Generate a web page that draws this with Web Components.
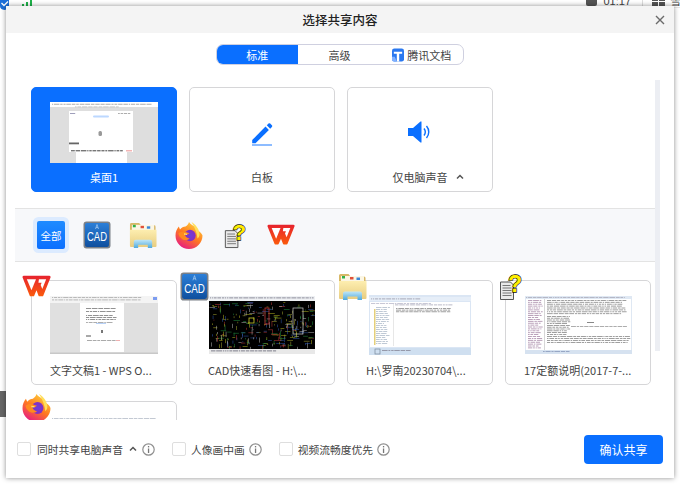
<!DOCTYPE html>
<html lang="zh"><head><meta charset="utf-8"><title>选择共享内容</title>
<style>
html,body{margin:0;height:100%;background:#fff;overflow:hidden}
body{font:11px "Noto Sans CJK SC","Liberation Sans",sans-serif;color:#444}
</style></head><body>
<share-desktop>
<share-dialog>
  <share-tabs></share-tabs>
  <share-scroller>
    <share-grid>
      <share-card label="桌面1" selected><app-thumb kind="desktop"></app-thumb></share-card>
      <share-card label="白板"><app-icon name="pen" size="28"></app-icon></share-card>
      <share-card label="仅电脑声音" chevron><app-icon name="speaker" size="28"></app-icon></share-card>
    </share-grid>
    <share-strip></share-strip>
    <share-grid class="windows">
      <share-card start label="文字文稿1 - WPS O..." badge="wps"><app-thumb kind="wps"></app-thumb></share-card>
      <share-card start label="CAD快速看图 - H:\..." badge="cad"><app-thumb kind="cad"></app-thumb></share-card>
      <share-card start label="H:\罗南20230704\..." badge="folder"><app-thumb kind="folder"></app-thumb></share-card>
      <share-card start label="17定额说明(2017-7-..." badge="doc"><app-thumb kind="notes"></app-thumb></share-card>
      <share-card label="" badge="firefox"><app-thumb kind="browser"></app-thumb></share-card>
    </share-grid>
  </share-scroller>
  <share-footer></share-footer>
</share-dialog>
</share-desktop>
<script>
const ICONS={
pen:`<svg viewBox="0 0 28 28" width="100%" height="100%"><path d="M4.200 22 17.500 8.600l3.400 3.400L7.500 25.200H4.200z" fill="#0a6fff"/><path d="M18.800 7.300l1.700-1.700a1.200 1.200 0 0 1 1.700 0l1.700 1.700a1.200 1.200 0 0 1 0 1.700l-1.700 1.700z" fill="#0a6fff"/><rect x="4" y="26" width="20" height="2" fill="#8dbcff"/></svg>`,
speaker:`<svg viewBox="0 0 28 28" width="100%" height="100%"><path d="M2 10h5L14.500 3.500h1V24.500h-1L7 18H2z" fill="#0a6fff"/><path d="M18 10.500c1.500 2 1.500 5 0 7M20.500 8c3 3.500 3 8.500 0 12" fill="none" stroke="#0a6fff" stroke-width="1.400"/></svg>`,
close:`<svg viewBox="0 0 10 10" width="100%" height="100%"><path d="M1 1l8 8M9 1L1 9" stroke="#6b6b6b" stroke-width="1.400" fill="none"/></svg>`,
chevron:`<svg viewBox="0 0 8 6" width="100%" height="100%"><path d="M1 4.500 4 1.500l3 3" stroke="#555" stroke-width="1.500" fill="none"/></svg>`,
info:`<svg viewBox="0 0 13 13" width="100%" height="100%"><circle cx="6.500" cy="6.500" r="5.700" fill="none" stroke="#8f8f8f" stroke-width="1.200"/><rect x="5.900" y="5.500" width="1.300" height="4.500" fill="#777"/><rect x="5.900" y="3" width="1.300" height="1.400" fill="#777"/></svg>`,
tdoc:`<svg viewBox="0 0 13 14" width="100%" height="100%"><rect width="13" height="14" rx="2.500" fill="#2a78f0"/><path d="M2 3.500h9v2.200H7.800V14H5.200V5.700H2z" fill="#fff"/><path d="M0 9l3 0 2.200 5H2a2 2 0 0 1-2-2z" fill="#7fb0ff"/></svg>`,
wps:`<svg viewBox="0 0 30 24" width="100%" height="100%"><defs><linearGradient id="w" x1="0" y1="0" x2="0" y2="1"><stop offset="0" stop-color="#e6232e"/><stop offset="1" stop-color="#fb5b0c"/></linearGradient></defs><path d="M.500 2.500a1.500 1.500 0 0 1 1.500-1.500H28a1.500 1.500 0 0 1 1.400 2L22 21.500a1 1 0 0 1-1 .7h-3a1 1 0 0 1-.9-.7L15 16l-2.400 5.500a1 1 0 0 1-.9.7H9a1 1 0 0 1-1-.7z" fill="url(#w)"/><path d="M5 4.500h9.500L9.800 16z" fill="#fff"/><path d="M17.500 4.500h7.500l-4 10-1.700-4 1-2.500h-3.300z" fill="#fff"/></svg>`,
cad:`<svg viewBox="0 0 28 28" width="100%" height="100%"><defs><linearGradient id="c" x1="0" y1="0" x2="0" y2="1"><stop offset="0" stop-color="#2b7fd8"/><stop offset="1" stop-color="#0f4f9e"/></linearGradient></defs><rect x=".500" y=".500" width="27" height="27" rx="3" fill="#7b8087"/><rect x="2" y="2" width="24" height="24" rx="2" fill="url(#c)"/><path d="M14 3.500 12.500 8M14 3.500 15.500 8M13 6.500h2" stroke="#9cc4ec" stroke-width=".8" fill="none"/><text x="14" y="20" text-anchor="middle" textLength="20" lengthAdjust="spacingAndGlyphs" font-family="Liberation Sans" font-size="12" fill="#fff">CAD</text></svg>`,
folder:`<svg viewBox="0 0 29 28" width="100%" height="100%"><defs><linearGradient id="f" x1="0" y1="0" x2="0" y2="1"><stop offset="0" stop-color="#fdeeb0"/><stop offset="1" stop-color="#e8cd80"/></linearGradient><linearGradient id="b" x1="0" y1="0" x2="0" y2="1"><stop offset="0" stop-color="#bfe6f7"/><stop offset="1" stop-color="#4fa9dc"/></linearGradient></defs><path d="M1 3a1.500 1.500 0 0 1 1.500-1.500h8l2 2.500H26a1.500 1.500 0 0 1 1.500 1.500V25H1z" fill="#d8b868"/><rect x="3" y="3.500" width="23" height="6" fill="#fbf6e4"/><rect x="4" y="3.500" width="3" height="2.500" fill="#32b04a"/><rect x="12" y="4.500" width="3.500" height="2.500" fill="#e0503a"/><rect x="18.500" y="5" width="3.500" height="2.500" fill="#3a88d8"/><path d="M1 8.500h27.500V25.500a1 1 0 0 1-1 1H2a1 1 0 0 1-1-1z" fill="url(#f)"/><path d="M5 27.500V21a2 2 0 0 1 2-2h15a2 2 0 0 1 2 2v6.500h-4.500V24h-10v3.500z" fill="url(#b)"/></svg>`,
firefox:`<svg viewBox="0 0 28 28" width="100%" height="100%"><defs><linearGradient id="g1" x1=".8" y1=".1" x2=".3" y2=".95"><stop offset="0" stop-color="#ffca3a"/><stop offset=".5" stop-color="#ff7a1f"/><stop offset="1" stop-color="#e9247a"/></linearGradient><radialGradient id="g2" cx=".5" cy=".5" r=".6"><stop offset="0" stop-color="#6e3fd8"/><stop offset="1" stop-color="#8a2bbd"/></radialGradient></defs><path d="M14 1c1 2.500 4 3 6.500 5.500 1 1 1.800 2 2.300 3.200C26 11 27.500 14 27.500 14.500 27.500 22 21.500 28 14 28S.500 22 .500 14.500C.500 11 1.800 8 3.800 5.600L5 8.500c1.500-2 3.500-2.800 5.500-3C12 4.500 13.500 3 14 1z" fill="url(#g1)"/><path d="M16.500 1c4 2.500 8 7 8 12.500 0 2-1 3-2 4-.5-5-2.500-11-6-16.500z" fill="#ffdf5a"/><circle cx="15" cy="14.500" r="5.700" fill="url(#g2)"/><path d="M3.500 12c2.500-1.500 5-2 7.500-1 1.500.6 2.500 1 3.500 1-1 1.500-3 2-4.500 1.800.5 2 2 3.500 4.500 3.700-2.500 2.500-7 2-9-1C4 15 3.500 13.500 3.500 12z" fill="#ff8a1e"/><path d="M9 13c1 0 2 .3 3 .3" stroke="#ffdf6a" stroke-width="1.300"/></svg>`,
doc:`<svg viewBox="0 0 29 28" width="100%" height="100%"><path d="M4.500 9.500h10l3 3V27h-13z" fill="#e9e9e9" stroke="#555" stroke-width="1"/><path d="M6.500 13h8M6.500 15.500h9M6.500 18h9M6.500 20.500h9M6.500 23h9" stroke="#777" stroke-width="1"/><text x="19" y="19" text-anchor="middle" font-family="Liberation Sans" font-size="23" font-weight="700" fill="#ffee00" stroke="#111" stroke-width="1.300" paint-order="stroke">?</text></svg>`
};
function define(name,css,html,init){
  customElements.define(name,class extends HTMLElement{
    connectedCallback(){
      if(this.shadowRoot)return;
      const r=this.attachShadow({mode:'open'});
      r.innerHTML=`<style>${css}</style>`+(typeof html==='function'?html(this):html);
      if(init)init(this,r);
    }
  });
}
define('app-icon',':host{display:inline-block;flex:none}svg{display:block}',el=>ICONS[el.getAttribute('name')],(el)=>{
  const s=el.getAttribute('size');
  const w=el.getAttribute('w')||s,h=el.getAttribute('h')||s;
  el.style.width=w+'px';el.style.height=h+'px';
});

/* Thumbnails: small vector pictures of the shared windows */
function rnd(seed){let x=seed;return()=>(x=(x*16807)%2147483647)/2147483647}
function lines(x,y,w,n,step,c,r,h=.8){let o='';for(let i=0;i<n;i++){let cx=x;while(cx<x+w){const l=1+r()*5;if(cx+l>x+w)break;o+=`<rect x="${cx.toFixed(1)}" y="${(y+i*step).toFixed(1)}" width="${l.toFixed(1)}" height="${h}" fill="${c}"/>`;cx+=l+.8}}return o}
const THUMBS={
desktop(){const r=rnd(7);return{w:108,h:61,b:`<rect width="108" height="61" fill="#dedede"/><rect width="108" height="5" fill="#fff"/>${lines(2,1.800,100,1,1,'#999',r)}<rect x="26" y="9" width="51" height="52" fill="#fff"/><rect x="19" y="9" width="64" height="41" fill="#fff"/>${lines(25,4.500,45,1,1,'#bbb',r)}<rect x="43" y="13.500" width="16" height="2" rx="1" fill="#bcd8ff"/>${lines(20,11,8,1,1,'#88a',r)}${lines(68,11,13,1,1,'#999',r)}<rect x="48.500" y="29" width="3.500" height="5" rx="1.500" fill="#999"/>${lines(49,35,3,1,1,'#a66',r)}<rect x="19" y="40.500" width="10" height="1.800" fill="#666"/>${lines(21,48,54,1,1,'#777',r,1.400)}<rect x="76" y="48" width="6" height="1.500" fill="#f3b5b5"/>`}},
wps(){const r=rnd(11);return{w:108,h:58,b:`<rect width="108" height="58" fill="#e0e0e0"/><rect width="108" height="7" fill="#f4f4f4"/>${lines(2,1,90,2,2.500,'#aaa',r)}<rect x="103" y="1" width="4" height="3" fill="#7c9cf0"/><rect x="30" y="7" width="44" height="49" fill="#fff"/>${lines(36,12,30,2,3,'#777',r)}${lines(36,19,32,3,2,'#777',r)}${lines(36,26,32,1,1,'#999',r)}<rect x="46" y="27" width="10" height="1" fill="#b8d2f8"/><rect x="51" y="34" width="2" height="3" fill="#777"/><rect x="36" y="39.500" width="5" height="1" fill="#555"/>${lines(37,44,34,1,1,'#aaa',r,1)}<rect x="66" y="44" width="4" height="1" fill="#f0b0b0"/><rect x="0" y="56.500" width="108" height="1.500" fill="#c8c8c8"/>`}},
cad(){const r=rnd(23);const cs=['#b8b820','#c03838','#3059b0','#bbbbbb','#239040','#a9a930'];let o='<rect width="106" height="58" fill="#000"/><rect width="106" height="5" fill="#eef0f3"/>'+lines(1,1.500,104,1,1,'#778',r);for(let i=0;i<300;i++){const x=r()*104,y=6+r()*45,c=cs[Math.floor(r()*6)];o+=r()>.5?`<rect x="${x.toFixed(1)}" y="${y.toFixed(1)}" width="${(1+r()*6).toFixed(1)}" height=".5" fill="${c}"/>`:`<rect x="${x.toFixed(1)}" y="${y.toFixed(1)}" width=".5" height="${(1+r()*5).toFixed(1)}" fill="${c}"/>`}o+=`<rect x="84" y="12" width="10" height="26" fill="none" stroke="#cfcfcf" stroke-width=".7"/><rect x="56" y="12" width="4" height="16" fill="none" stroke="#c03838" stroke-width=".8"/><rect x="40" y="22" width="5" height="5" fill="none" stroke="#c9c92a" stroke-width=".8"/><rect y="53" width="106" height="5" fill="#e8e8e8"/>`+lines(2,54.500,70,1,1,'#667',r);return{w:106,h:58,b:o}},
folder(){const r=rnd(31);return{w:102,h:60,b:`<rect width="102" height="60" fill="#dbe6f4"/><rect y="2" width="102" height="4" fill="#e6eef8"/><rect y="7" x="1" width="100" height="45" fill="#fff"/>${lines(2,3.500,50,1,1,'#99a',r)}${lines(2,8,60,1,1,'#bbc',r)}<rect x="24" y="9" width=".7" height="42" fill="#ddd"/><rect x="5" y="14" width="1.500" height="36" fill="#e5cf7a"/>${lines(7,12,14,19,2,'#b0bccb',r)}${lines(26,9.500,60,1,1,'#aab',r)}${lines(27,13,55,3,1.700,'#888',r)}<rect y="53" width="102" height="7" fill="#cfdff0"/><rect x="6" y="54" width="5" height="5" fill="none" stroke="#789" stroke-width=".7"/>${lines(13,55,30,1,1,'#889',r)}`}},
notes(){const r=rnd(43);return{w:107,h:58,b:`<rect width="107" height="58" fill="#dfe8f3"/><rect x="1" y="3" width="105" height="51" fill="#fff"/>${lines(1,1,100,1,1,'#aab',r)}<rect x="19" y="3" width=".8" height="51" fill="#ccc"/>${lines(3,4,15,26,1.900,'#a98aa9',r)}${lines(22,4,80,8,1.900,'#888',r)}${lines(22,20,24,11,1.800,'#888',r)}<rect x="62" y="26" width="7" height="1" fill="#888"/>${lines(46,30,58,1,1,'#999',r)}${lines(22,40,84,4,2,'#888',r)}<rect y="54" width="107" height="4" fill="#d6e2f0"/>${lines(18,55,30,1,1,'#89b',r)}`}},
browser(){const r=rnd(59);return{w:108,h:60,b:`<rect width="108" height="60" fill="#fff"/>${lines(2,2,104,1,1,'#b5bcc8',r)}`}}
};
define('app-thumb',':host{display:block;line-height:0}svg{display:block}',el=>{const t=THUMBS[el.getAttribute('kind')]();return `<svg width="${t.w}" height="${t.h}" viewBox="0 0 ${t.w} ${t.h}">${t.b}</svg>`});

define('share-desktop',`
:host{display:block;position:relative;width:680px;height:484px;overflow:hidden;background:#fff}
.bar{height:7px;display:flex;align-items:flex-start;border-bottom:1px solid #e6e6e6;position:relative}
.shield{width:9px;height:10px;flex:none}
.sig{width:11px;height:6px;margin-left:13px;display:flex;gap:2px;align-items:flex-end;flex:none}
.sig i{display:block;width:2px;background:#1fb34a}
.right{margin-left:auto;display:flex;align-items:center;height:2px;font:11px "Liberation Sans",sans-serif;color:#444}
.clock{width:11px;height:10px;background:#555;border-radius:2px;margin-right:6px}
.sep{width:1px;height:12px;background:#ddd;margin:0 9px 0 11px}
.grid{display:grid;grid-template-columns:6px 6px;gap:1px;margin-right:5px}
.grid i{display:block;height:5px;background:#555}
.tail{width:10px;overflow:hidden;color:#333}
.edge{position:absolute;left:0;top:391px;width:6px;height:26px;background:#666}
`,`<div class="bar">
<svg class="shield" viewBox="0 0 9 10"><path d="M0 0h9v6a5 4 0 0 1-4.500 4A5 4 0 0 1 0 6z" fill="#1d6fd8"/><path d="M1.500 3 4 5.500 8 1.500" stroke="#fff" stroke-width="1.300" fill="none"/></svg>
<div class="sig"><i style="height:2px"></i><i style="height:4px"></i><i style="height:7px"></i></div>
<div class="right"><span class="clock"></span><span>01:17</span><span class="sep"></span><span class="grid"><i></i><i></i><i></i><i></i></span><span class="tail">雪</span></div>
</div><div class="edge"></div><slot></slot>`);

define('share-dialog',`
:host{position:absolute;left:6px;top:6px;width:668px;height:472px;background:#fff;display:flex;flex-direction:column;box-shadow:0 0 5px rgba(0,0,0,.45)}
header{height:27px;flex:none;background:#f4f4f4;display:flex;align-items:center;justify-content:center;position:relative;font-size:12.500px;font-weight:500;color:#222}
.x{position:absolute;right:9px;top:9px;width:10px;height:10px;line-height:0}
`,`<header>选择共享内容<span class="x"><app-icon name="close" size="10"></app-icon></span></header><slot></slot>`);

define('share-tabs',`
:host{display:flex;flex:none;justify-content:center;margin:11px 0 15px}
.seg{display:flex;height:21px;width:248px;box-sizing:border-box;border:1px solid #cfd0e0;border-radius:7px;overflow:hidden;font-size:11px;color:#444}
.seg div{flex:1;display:flex;align-items:center;justify-content:center;gap:3px}
.on{background:#0a6fff;color:#fff;margin:-1px 0 -1px -1px}
`,`<div class="seg"><div class="on">标准</div><div>高级</div><div><app-icon name="tdoc" w="12" h="14"></app-icon>腾讯文档</div></div>`);

define('share-scroller',`
:host{display:block;position:relative;height:340px;flex:none;overflow:hidden;padding-top:7px;box-sizing:border-box}
.thumb{position:absolute;left:649px;top:0;width:5px;height:271px;background:#eceef3}
`,`<slot></slot><div class="thumb"></div>`);

define('share-grid',`
:host{display:grid;grid-template-columns:repeat(4,146px);gap:16px 12px;padding-left:25px}
:host(.windows){padding-top:18px}
`,`<slot></slot>`);

define('share-card',`
:host{display:block;position:relative;height:105px;box-sizing:border-box;border:1px solid #d6d6d8;border-radius:5px;background:#fff;color:#444}
:host([selected]){background:#0a6fff;border-color:#0a6fff;color:#fff}
.media{position:absolute;left:0;right:0;top:14px;height:60px;display:flex;align-items:center;justify-content:center}
.label{position:absolute;left:0;right:0;top:81px;height:16px;line-height:16px;display:flex;align-items:center;justify-content:center;font-size:11px;white-space:nowrap}
:host([start]) .label{justify-content:flex-start;padding-left:18px}
.text{position:relative;display:block}
.chev{position:absolute;left:calc(100% + 8px);top:5px;line-height:0}
.badge{position:absolute;left:-10px;top:-9px;width:29px;height:29px}
`,el=>`<div class="media"><slot></slot></div><div class="label"><span class="text">${el.getAttribute('label')}${el.hasAttribute('chevron')?'<span class="chev"><app-icon name="chevron" w="8" h="6"></app-icon></span>':''}</span></div>${el.hasAttribute('badge')?`<span class="badge"><app-icon name="${el.getAttribute('badge')}" size="29"></app-icon></span>`:''}`);

define('share-strip',`
:host{display:flex;margin:16px 19px 0 9px;height:54px;box-sizing:border-box;background:#f7f8fa;border-top:1px solid #e3e3e3;border-bottom:1px solid #e3e3e3;align-items:center;padding-left:22px;gap:18px}
.all{width:28px;height:28px;background:linear-gradient(#1f8bff,#0a6fff);border-radius:2px;color:#fff;font-size:10.500px;display:flex;align-items:center;justify-content:center;box-shadow:0 0 0 4px #dcebff;flex:none}
`,`<div class="all">全部</div><app-icon name="cad" size="28"></app-icon><app-icon name="folder" size="28"></app-icon><app-icon name="firefox" size="28"></app-icon><app-icon name="doc" size="28"></app-icon><app-icon name="wps" size="28"></app-icon>`);

define('share-check',`
:host{display:flex;align-items:center;color:#444;font-size:10.750px;white-space:nowrap}
.box{width:12px;height:12px;border:1px solid #dedede;border-radius:2px;margin-right:5px;background:#fff}
:host([chevron]) .box{margin-right:6px}
.chev{margin-left:6px;line-height:0;display:flex}
.info{margin-left:4px;line-height:0;display:flex}
:host([chevron]) .info{margin-left:5px}
`,el=>`<span class="box"></span><span>${el.getAttribute('label')}</span>${el.hasAttribute('chevron')?'<span class="chev"><app-icon name="chevron" w="8" h="6"></app-icon></span>':''}<span class="info"><app-icon name="info" size="13"></app-icon></span>`);

define('share-footer',`
:host{display:flex;flex:1;align-items:center;padding:0 11px;gap:17px}
button{margin-left:auto;width:79px;height:29px;border:0;border-radius:4px;background:#0a6fff;color:#fff;font:12px "Noto Sans CJK SC",sans-serif;padding:0}
`,`<share-check label="同时共享电脑声音" chevron></share-check><share-check label="人像画中画"></share-check><share-check label="视频流畅度优先"></share-check><button>确认共享</button>`);
</script>
</body></html>
